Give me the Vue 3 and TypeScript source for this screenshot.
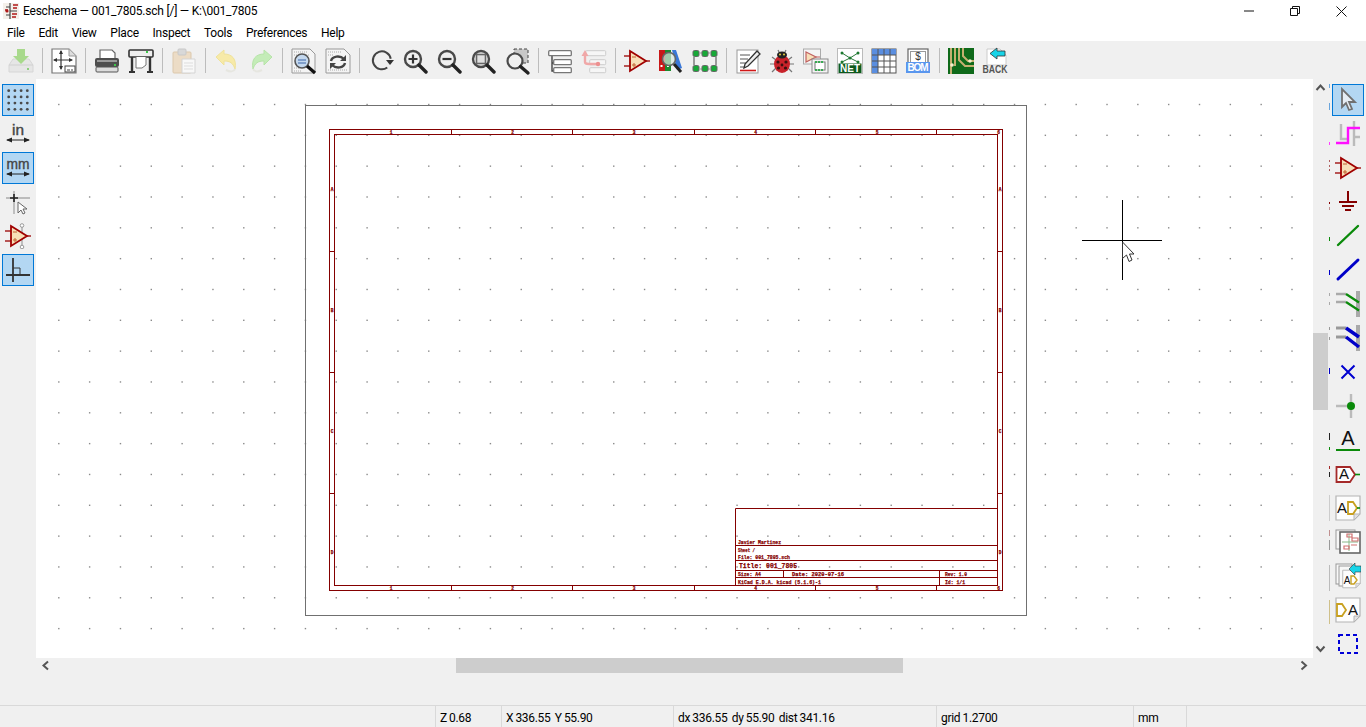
<script setup lang="ts">
// Eeschema main window: title bar, menus, three toolbars, sheet canvas, status bar.
const menus = ["File", "Edit", "View", "Place", "Inspect", "Tools", "Preferences", "Help"];

const GRID = 30.83;
const gridX = Array.from({ length: 41 }, (_, i) => 58.8 + i * GRID);
const gridY = Array.from({ length: 18 }, (_, i) => 104.5 + i * GRID);

// frame ticks, one zone is 121.3px wide
const ZONE = 121.3;
const colTicks = [1, 2, 3, 4, 5].map((i) => 329.7 + i * ZONE);
const rowTicks = [1, 2, 3].map((i) => 129.3 + i * ZONE);
const colLabels = ["1", "2", "3", "4", "5", "6"];
const rowLabels = ["A", "B", "C", "D"];

// bits of the right toolbar's icons that stick out next to the scrollbar
const slivers = [
  { y: 84, h: 4, c: "#6aa5dc" }, { y: 103, h: 7, c: "#6aa5dc" }, { y: 142, h: 3, c: "#ff40ff" },
  { y: 160, h: 2, c: "#b06060" }, { y: 165, h: 2, c: "#b06060" }, { y: 169, h: 2, c: "#b06060" },
  { y: 202, h: 2, c: "#840000" }, { y: 207, h: 3, c: "#c09090" }, { y: 237, h: 4, c: "#0a8a0a" },
  { y: 270, h: 5, c: "#0000c8" }, { y: 293, h: 3, c: "#aaaaaa" }, { y: 302, h: 3, c: "#aaaaaa" },
  { y: 327, h: 3, c: "#999999" }, { y: 337, h: 3, c: "#999999" }, { y: 368, h: 6, c: "#0000c8" },
  { y: 433, h: 7, c: "#222222" }, { y: 447, h: 3, c: "#0a8a0a" }, { y: 466, h: 3, c: "#a52a2a" },
  { y: 472, h: 5, c: "#222222" }, { y: 495, h: 26, c: "#cccccc" }, { y: 530, h: 6, c: "#c09090" },
  { y: 540, h: 10, c: "#999999" }, { y: 565, h: 26, c: "#bbbbbb" }, { y: 600, h: 24, c: "#cfc08a" },
];
</script>

<template>
  <div class="window">
    <svg class="defs" width="0" height="0">
      <symbol id="opamp" viewBox="0 0 26 26">
        <path d="M0 8H6M0 18H6M21 13H26" fill="none" stroke="#a52020" stroke-width="1.6" />
        <path d="M6 3L22 13L6 23Z" fill="#f7dfb8" stroke="#a00000" stroke-width="1.8" />
        <path d="M8 9H12M8 17H12M10 15V19" stroke="#c06030" stroke-width="1" />
      </symbol>
      <symbol id="lens" viewBox="0 0 26 26">
        <circle cx="11" cy="11" r="8" fill="none" stroke="#4a4a4a" stroke-width="2.4" />
        <path d="M17 17L24 24" stroke="#222" stroke-width="3.4" stroke-linecap="round" />
      </symbol>
      <symbol id="sheetpage" viewBox="0 0 26 26">
        <path d="M1 1H25V19L19 25H1Z" fill="#fdfdfd" stroke="#b4b4b4" stroke-width="1.2" />
        <path d="M19 25V19H25Z" fill="#e2e2e2" stroke="#b4b4b4" stroke-width="1" />
      </symbol>
    </svg>

    <header class="titlebar">
      <svg class="app-icon" width="16" height="16" viewBox="0 0 16 16">
        <rect x="0" y="0" width="16" height="16" fill="#f4f0ea" />
        <path d="M7 0V16M3 4H7M3 12H7M7 8H14" stroke="#444" stroke-width="1.2" fill="none" />
        <path d="M10 2H15M10 5H14M2 7H5M9 11H14M9 14H13" stroke="#b01818" stroke-width="1.6" />
        <circle cx="4" cy="8" r="1.6" fill="#b01818" />
      </svg>
      <span class="title-text">Eeschema — 001_7805.sch [/] — K:\001_7805</span>
      <div class="win-buttons">
        <div class="win-btn">
          <svg width="10" height="10" viewBox="0 0 10 10"><path d="M0 5H10" stroke="#111" /></svg>
        </div>
        <div class="win-btn">
          <svg width="10" height="10" viewBox="0 0 10 10">
            <path d="M0.5 2.5H7.5V9.5H0.5ZM2.5 2.5V0.5H9.5V7.5H7.5" fill="none" stroke="#111" />
          </svg>
        </div>
        <div class="win-btn">
          <svg width="11" height="11" viewBox="0 0 11 11"><path d="M0.5 0.5L10.5 10.5M10.5 0.5L0.5 10.5" stroke="#111" /></svg>
        </div>
      </div>
    </header>

    <nav class="menubar">
      <span v-for="m in menus" :key="m" class="menu-item">{{ m }}</span>
    </nav>

    <div class="top-toolbar">
      <div class="tool">
        <svg width="26" height="26" viewBox="0 0 26 26">
          <path d="M5 11L1 17V24H25V17L21 11Z" fill="#e6e6e6" stroke="#d6d6d6" />
          <path d="M1 17H25" stroke="#d0d0d0" />
          <path d="M9 1H17V8H21L13 16L5 8H9Z" fill="#a8d98c" />
          <rect x="19" y="20" width="2" height="2" fill="#8fd080" />
        </svg>
      </div>
      <i class="sep"></i>
      <div class="tool">
        <svg width="26" height="26" viewBox="0 0 26 26">
          <path d="M1 1H18L25 8V25H1Z" fill="#fff" stroke="#777" stroke-width="1.2" />
          <path d="M18 1V8H25" fill="#ddd" stroke="#999" />
          <path d="M10 3V21M3 12H21" stroke="#333" stroke-width="1.2" />
          <path d="M10 2L8 6H12ZM10 22L8 18H12ZM2 12L6 10V14ZM22 12L18 10V14Z" fill="#333" />
          <rect x="14" y="18" width="10" height="6" fill="#fff" stroke="#444" />
          <path d="M16 22H19M20 22H22" stroke="#444" />
        </svg>
      </div>
      <i class="sep"></i>
      <div class="tool">
        <svg width="26" height="26" viewBox="0 0 26 26">
          <path d="M6 11V2H18L21 5V11Z" fill="#fff" stroke="#666" stroke-width="1.2" />
          <rect x="1" y="10" width="24" height="9" rx="2" fill="#4e4e4e" />
          <rect x="3" y="12" width="20" height="2" fill="#9a9a9a" />
          <rect x="20" y="16" width="2" height="2" fill="#3ec84a" />
          <rect x="2" y="19" width="22" height="5" rx="1" fill="#dcdcdc" stroke="#555" />
        </svg>
      </div>
      <div class="tool">
        <svg width="26" height="26" viewBox="0 0 26 26">
          <rect x="1" y="2" width="24" height="7" rx="1" fill="#eee" stroke="#333" stroke-width="1.6" />
          <rect x="18" y="3" width="2" height="2" fill="#3ec84a" />
          <path d="M8 9V20H14L18 17V9" fill="#fff" stroke="#777" />
          <path d="M4 9V23M22 9V23" stroke="#333" stroke-width="2.4" />
          <path d="M1 24H7M19 24H25" stroke="#333" stroke-width="2" />
        </svg>
      </div>
      <i class="sep"></i>
      <div class="tool">
        <svg width="26" height="26" viewBox="0 0 26 26">
          <rect x="2" y="4" width="18" height="21" rx="1" fill="#ecdcc6" stroke="#dcc8ac" />
          <rect x="7" y="1" width="8" height="6" rx="1" fill="#d8d8d8" stroke="#c8c8c8" />
          <path d="M11 11H24V25H11Z" fill="#f8f8f8" stroke="#d4d4d4" />
          <path d="M13 15H22M13 18H22M13 21H22" stroke="#dddddd" />
        </svg>
      </div>
      <i class="sep"></i>
      <div class="tool">
        <svg width="26" height="26" viewBox="0 0 26 26">
          <path d="M2 9L10 2V6C18 6 23 11 21 21C19 15 16 13 10 13V17Z" fill="#f7eaa8" stroke="#efe29a" />
          <path d="M12 22C16 24 20 24 21 21" stroke="#e6e6e0" stroke-width="2" fill="none" />
        </svg>
      </div>
      <div class="tool">
        <svg width="26" height="26" viewBox="0 0 26 26">
          <path d="M24 9L16 2V6C8 6 3 11 5 21C7 15 10 13 16 13V17Z" fill="#c4ecb8" stroke="#b6e4a8" />
          <path d="M14 22C10 24 6 24 5 21" stroke="#e6e6e0" stroke-width="2" fill="none" />
        </svg>
      </div>
      <i class="sep"></i>
      <div class="tool">
        <svg width="26" height="26" viewBox="0 0 26 26">
          <path d="M1 1H19L24 6V25H1Z" fill="#f4f4f4" stroke="#999" />
          <path d="M3 4H16M3 7H18M3 20H8M3 23H10" stroke="#aaa" stroke-dasharray="1 1" />
          <circle cx="11" cy="13" r="7" fill="#c4d8ee" stroke="#555" stroke-width="1.6" />
          <path d="M7 12H15M7 15H15" stroke="#6a8cc0" stroke-width="1.4" />
          <path d="M16 18L24 25" stroke="#111" stroke-width="3.2" />
        </svg>
      </div>
      <div class="tool">
        <svg width="26" height="26" viewBox="0 0 26 26">
          <path d="M1 1H19L25 7V25H1Z" fill="#f4f4f4" stroke="#999" />
          <path d="M3 4H16M3 7H8M3 22H22" stroke="#aaa" stroke-dasharray="1 1" />
          <path d="M6 13C7 8 15 7 19 11M20 15C19 20 11 21 7 17" fill="none" stroke="#444" stroke-width="2.4" />
          <path d="M21 7V13H15ZM5 21V15H11Z" fill="#444" />
        </svg>
      </div>
      <i class="sep"></i>
      <div class="tool">
        <svg width="26" height="26" viewBox="0 0 26 26">
          <path d="M19 5A9 9 0 1 0 22 14" fill="none" stroke="#444" stroke-width="2" transform="rotate(40 13 13)" />
          <path d="M18 12H26L22 17Z" fill="#333" />
        </svg>
      </div>
      <div class="tool">
        <svg width="26" height="26" viewBox="0 0 26 26">
          <use href="#lens" width="26" height="26" />
          <path d="M6.5 11H15.5M11 6.5V15.5" stroke="#333" stroke-width="2.2" />
        </svg>
      </div>
      <div class="tool">
        <svg width="26" height="26" viewBox="0 0 26 26">
          <use href="#lens" width="26" height="26" />
          <path d="M6.5 11H15.5" stroke="#333" stroke-width="2.2" />
        </svg>
      </div>
      <div class="tool">
        <svg width="26" height="26" viewBox="0 0 26 26">
          <use href="#lens" width="26" height="26" />
          <rect x="6.5" y="6.5" width="9" height="9" fill="#e0e0e0" stroke="#666" stroke-width="1.6" />
        </svg>
      </div>
      <div class="tool">
        <svg width="26" height="26" viewBox="0 0 26 26">
          <rect x="10" y="1" width="14" height="14" fill="#c8c8c8" stroke="#444" stroke-dasharray="3 2" />
          <circle cx="11" cy="13" r="7.5" fill="#f0f0f0" stroke="#4a4a4a" stroke-width="2.2" />
          <path d="M16.5 18.5L24 25" stroke="#222" stroke-width="3.4" stroke-linecap="round" />
        </svg>
      </div>
      <i class="sep"></i>
      <div class="tool">
        <svg width="26" height="26" viewBox="0 0 26 26">
          <path d="M5 8V23H12M5 15H12" fill="none" stroke="#444" stroke-width="1.4" />
          <rect x="1.7" y="2.7" width="22.6" height="5" rx="1" fill="#fff" stroke="#777" stroke-width="1.3" />
          <rect x="6.7" y="11.7" width="17.6" height="5" rx="1" fill="#fff" stroke="#777" stroke-width="1.3" />
          <rect x="6.7" y="19.7" width="17.6" height="5" rx="1" fill="#fff" stroke="#777" stroke-width="1.3" />
        </svg>
      </div>
      <div class="tool">
        <svg width="26" height="26" viewBox="0 0 26 26">
          <g opacity="0.4">
            <rect x="4.7" y="2.7" width="20" height="5" rx="1" fill="#fff" stroke="#999" />
            <rect x="8.7" y="11.7" width="16" height="5" rx="1" fill="#fff" stroke="#999" />
            <rect x="8.7" y="19.7" width="16" height="5" rx="1" fill="#fff" stroke="#999" />
          </g>
          <path d="M4 8V14C4 16 6 16 8 16H16" fill="none" stroke="#f0a8a8" stroke-width="2.4" />
          <path d="M4 2L0.5 8H7.5Z" fill="#f0a8a8" />
          <circle cx="17" cy="16" r="2.2" fill="#ec9090" />
        </svg>
      </div>
      <i class="sep"></i>
      <div class="tool"><svg width="26" height="26" viewBox="0 0 26 26"><use href="#opamp" width="26" height="26" /></svg></div>
      <div class="tool">
        <svg width="26" height="26" viewBox="0 0 26 26">
          <rect x="1" y="2" width="6" height="21" fill="#c81818" />
          <rect x="7" y="2" width="6" height="21" fill="#1c8a2e" />
          <path d="M14 2H18L24 20L19 22Z" fill="#3a78d8" />
          <rect x="2.5" y="17" width="2" height="2" fill="#fff" />
          <rect x="9" y="17" width="2" height="2" fill="#fff" />
          <circle cx="11" cy="11" r="6.5" fill="#d8e8e0" fill-opacity="0.7" stroke="#666" stroke-width="1.5" />
          <path d="M16 16L23 24" stroke="#222" stroke-width="3" />
        </svg>
      </div>
      <div class="tool">
        <svg width="26" height="26" viewBox="0 0 26 26">
          <path d="M2 9V17M24 9V17" stroke="#777" stroke-width="1.4" />
          <path d="M8 5H18M8 21H18" stroke="#999" stroke-width="1" />
          <rect x="1" y="2.5" width="6" height="6" rx="1.5" fill="#18a838" stroke="#666" />
          <rect x="10" y="2.5" width="6" height="6" rx="1.5" fill="#18a838" stroke="#666" />
          <rect x="19" y="2.5" width="6" height="6" rx="1.5" fill="#18a838" stroke="#666" />
          <rect x="1" y="17.5" width="6" height="6" rx="1.5" fill="#18a838" stroke="#666" />
          <rect x="10" y="17.5" width="6" height="6" rx="1.5" fill="#18a838" stroke="#666" />
          <rect x="19" y="17.5" width="6" height="6" rx="1.5" fill="#18a838" stroke="#666" />
        </svg>
      </div>
      <i class="sep"></i>
      <div class="tool">
        <svg width="26" height="26" viewBox="0 0 26 26">
          <rect x="2" y="2" width="21" height="23" fill="#fff" stroke="#999" />
          <path d="M5 7H15M5 11H13M5 15H11M5 19H9" stroke="#555" />
          <path d="M22 3L25 6L13 18L9 20L10 16Z" fill="#eee" stroke="#333" stroke-width="1.3" />
          <path d="M5 22.5H21" stroke="#d01818" stroke-width="1.6" />
        </svg>
      </div>
      <div class="tool">
        <svg width="26" height="26" viewBox="0 0 26 26">
          <path d="M3 9L7 12M23 9L19 12M1 16H6M25 16H20M3 24L7 20M23 24L19 20M9 2L11 6M17 2L15 6" stroke="#777" stroke-width="1.2" />
          <ellipse cx="13" cy="16" rx="8" ry="9" fill="#c8222a" />
          <ellipse cx="13" cy="7" rx="5" ry="3.4" fill="#222" />
          <circle cx="11" cy="6.5" r="1" fill="#e8d040" />
          <circle cx="15" cy="6.5" r="1" fill="#e8d040" />
          <circle cx="9" cy="14" r="1.6" fill="#3a1010" />
          <circle cx="17" cy="14" r="1.6" fill="#3a1010" />
          <circle cx="9.5" cy="20" r="1.6" fill="#3a1010" />
          <circle cx="16.5" cy="20" r="1.6" fill="#3a1010" />
          <circle cx="13" cy="17" r="1.4" fill="#3a1010" />
        </svg>
      </div>
      <div class="tool">
        <svg width="26" height="26" viewBox="0 0 26 26">
          <rect x="0.5" y="1" width="17" height="15" fill="#f4f4f4" stroke="#aaa" />
          <path d="M3 4L13 9L3 14Z" fill="#f7dfb8" stroke="#c06060" stroke-width="1.2" />
          <path d="M13 9H17" stroke="#c06060" />
          <rect x="9" y="11" width="16" height="14" fill="#f4f4f4" stroke="#888" />
          <rect x="12" y="14" width="10" height="8" fill="#fff" stroke="#777" />
          <path d="M13 13V15M16 13V15M19 13V15M13 21V23M16 21V23M19 21V23" stroke="#18a838" stroke-width="1.6" />
        </svg>
      </div>
      <div class="tool">
        <svg width="26" height="26" viewBox="0 0 26 26">
          <rect x="0.5" y="0.5" width="25" height="25" fill="#fff" stroke="#bbb" />
          <path d="M5 5L13 10L21 5M13 10L5 14M13 10L21 14" stroke="#2a7a3a" fill="none" />
          <circle cx="5" cy="5" r="1.5" fill="#1c7a30" />
          <circle cx="21" cy="5" r="1.5" fill="#1c7a30" />
          <circle cx="13" cy="10" r="1.5" fill="#1c7a30" />
          <circle cx="5" cy="14" r="1.5" fill="#1c7a30" />
          <circle cx="21" cy="14" r="1.5" fill="#1c7a30" />
          <rect x="1.5" y="15.5" width="23" height="9.5" fill="#0c5a1c" />
          <text x="13" y="24" class="icon-label net" text-anchor="middle" textLength="20">NET</text>
        </svg>
      </div>
      <div class="tool">
        <svg width="26" height="26" viewBox="0 0 26 26">
          <rect x="1" y="1" width="24" height="24" fill="#fff" stroke="#555" />
          <rect x="1" y="1" width="24" height="6" fill="#5a8ee0" />
          <rect x="1" y="1" width="6" height="24" fill="#5a8ee0" />
          <path d="M7 1V25M13 1V25M19 1V25M1 7H25M1 13H25M1 19H25" stroke="#555" />
        </svg>
      </div>
      <div class="tool">
        <svg width="26" height="26" viewBox="0 0 26 26">
          <rect x="3" y="1" width="20" height="16" fill="#fff" stroke="#666" stroke-width="1.2" />
          <rect x="5.5" y="3.5" width="15" height="11" fill="none" stroke="#999" />
          <text x="13" y="12" class="icon-label dollar" text-anchor="middle">$</text>
          <rect x="1" y="14" width="24" height="11" fill="#5a96ee" />
          <text x="13" y="23" class="icon-label bom" text-anchor="middle" textLength="21">BOM</text>
        </svg>
      </div>
      <i class="sep"></i>
      <div class="tool">
        <svg width="26" height="26" viewBox="0 0 26 26">
          <rect x="0" y="0" width="26" height="26" fill="#0f6a1a" />
          <path d="M3 0V26M7 0V18M11 0V12L17 18H26M15 0V8L20 13H26" fill="none" stroke="#c4b070" stroke-width="2" />
          <circle cx="22" cy="13" r="1.8" fill="#f4eecc" />
          <circle cx="4" cy="17" r="1.8" fill="#f4eecc" />
        </svg>
      </div>
      <div class="tool">
        <svg width="26" height="26" viewBox="0 0 26 26">
          <path d="M5 1H18L24 7V17H5Z" fill="#fff" stroke="#ccc" />
          <path d="M8 5.5L15 0V3H23V8H15V11Z" fill="#18d4e8" stroke="#333" stroke-width="0.8" />
          <text x="13" y="25" class="icon-label back" text-anchor="middle" textLength="25" lengthAdjust="spacingAndGlyphs">BACK</text>
        </svg>
      </div>
    </div>

    <div class="main">
      <aside class="side-toolbar">
        <div class="side-tool on">
          <svg width="26" height="26" viewBox="0 0 26 26" fill="#4a4a4a">
            <template v-for="y in [3.7, 9.9, 16.1, 22.3]" :key="y">
              <circle v-for="x in [3.7, 9.9, 16.1, 22.3]" :key="x" :cx="x" :cy="y" r="1.4" />
            </template>
          </svg>
        </div>
        <div class="side-tool">
          <svg width="26" height="26" viewBox="0 0 26 26">
            <text x="13" y="14" class="icon-label units" text-anchor="middle" textLength="12" lengthAdjust="spacingAndGlyphs">in</text>
            <path d="M2 19H24" stroke="#222" />
            <path d="M1 19L7 16.5V21.5ZM25 19L19 16.5V21.5Z" fill="#222" />
          </svg>
        </div>
        <div class="side-tool on">
          <svg width="26" height="26" viewBox="0 0 26 26">
            <text x="13" y="14" class="icon-label units" text-anchor="middle" textLength="23" lengthAdjust="spacingAndGlyphs">mm</text>
            <path d="M2 19H24" stroke="#222" />
            <path d="M1 19L7 16.5V21.5ZM25 19L19 16.5V21.5Z" fill="#222" />
          </svg>
        </div>
        <div class="side-tool">
          <svg width="26" height="26" viewBox="0 0 26 26">
            <path d="M9 2V25M1 9H25" stroke="#aaa" stroke-width="1.4" />
            <path d="M9 5V13M5 9H13" stroke="#222" stroke-width="1.6" />
            <path d="M13 13V24L16 21L18 25L20 24L18 20H22Z" fill="#fff" stroke="#666" />
          </svg>
        </div>
        <div class="side-tool">
          <svg width="26" height="26" viewBox="0 0 26 26">
            <path d="M17 4V24" stroke="#aaa" stroke-width="1.4" />
            <circle cx="17" cy="2.5" r="1.8" fill="#fff" stroke="#999" />
            <circle cx="17" cy="24" r="1.8" fill="#fff" stroke="#999" />
            <use href="#opamp" width="26" height="26" />
          </svg>
        </div>
        <div class="side-tool on">
          <svg width="26" height="26" viewBox="0 0 26 26">
            <path d="M8 1V25M1 18H25" stroke="#333" stroke-width="1.8" />
            <path d="M8 11H15V18" fill="none" stroke="#333" />
          </svg>
        </div>
      </aside>

      <div class="center">
        <div class="canvas-row">
          <svg class="canvas" width="1277" height="579" viewBox="36 79 1277 579">
            <g fill="#8a8a8a">
              <template v-for="y in gridY" :key="y">
                <rect v-for="x in gridX" :key="x" :x="x - 0.7" :y="y - 0.7" width="1.4" height="1.4" />
              </template>
            </g>
            <rect x="305.5" y="105.5" width="721" height="510" fill="none" stroke="#707070" />
            <g fill="none" stroke="#840000">
              <rect x="329.5" y="129.5" width="673" height="461" />
              <rect x="334.5" y="134.5" width="663" height="451" />
              <path v-for="x in colTicks" :key="x" :d="`M${Math.round(x) + 0.5} 129V134M${Math.round(x) + 0.5} 586V591`" />
              <path v-for="y in rowTicks" :key="y" :d="`M330 ${Math.round(y) + 0.5}H334M998 ${Math.round(y) + 0.5}H1002`" />
              <path d="M735.5 585V508.5H997M735.5 545.5H997M735.5 560.5H997M735.5 570.5H997M735.5 577.5H997M783.5 570V577M939.5 570V585" />
            </g>
            <g class="zone-text" text-anchor="middle">
              <template v-for="(c, i) in colLabels" :key="c">
                <text :x="391 + i * 121.5" y="133.5">{{ c }}</text>
                <text :x="391 + i * 121.5" y="590">{{ c }}</text>
              </template>
              <template v-for="(r, i) in rowLabels" :key="r">
                <text x="332" :y="191 + i * 121">{{ r }}</text>
                <text x="1000" :y="191 + i * 121">{{ r }}</text>
              </template>
            </g>
            <g class="sheet-text">
              <text x="738" y="544" textLength="43" lengthAdjust="spacingAndGlyphs">Javier Martinez</text>
              <text x="738" y="552" textLength="17" lengthAdjust="spacingAndGlyphs">Sheet /</text>
              <text x="738" y="558.5" textLength="52" lengthAdjust="spacingAndGlyphs">File: 001_7805.sch</text>
              <text x="739" y="568" class="big" textLength="58" lengthAdjust="spacingAndGlyphs">Title: 001_7805</text>
              <text x="738" y="576" textLength="23" lengthAdjust="spacingAndGlyphs">Size: A4</text>
              <text x="792" y="576" textLength="52" lengthAdjust="spacingAndGlyphs">Date: 2020-07-16</text>
              <text x="945" y="576" textLength="22" lengthAdjust="spacingAndGlyphs">Rev: 1.0</text>
              <text x="738" y="583.5" textLength="83" lengthAdjust="spacingAndGlyphs">KiCad E.D.A.  kicad (5.1.6)-1</text>
              <text x="945" y="583.5" textLength="20" lengthAdjust="spacingAndGlyphs">Id: 1/1</text>
            </g>
            <path d="M1082 240.5H1162M1122.5 200V280" stroke="#000" />
            <path d="M1122.5 242V258.5L1126.5 255L1129 261.5L1132 260L1129.5 254H1134Z" fill="#fff" stroke="#333" />
          </svg>
          <div class="vbar">
            <div class="vtrack">
              <svg class="arrow-v" width="15" height="17" viewBox="0 0 15 17"><path d="M3.5 11L7.5 6.5L11.5 11" fill="none" stroke="#555" stroke-width="2" /></svg>
              <div class="vthumb"></div>
              <svg class="arrow-v bottom" width="15" height="17" viewBox="0 0 15 17"><path d="M3.5 5.5L7.5 10L11.5 5.5" fill="none" stroke="#555" stroke-width="2" /></svg>
            </div>
            <svg class="slivers" width="2" height="579" viewBox="0 79 2 579">
              <rect v-for="s in slivers" :key="s.y" x="1" :y="s.y" width="1" :height="s.h" :fill="s.c" />
            </svg>
          </div>
        </div>
        <div class="hbar">
          <svg class="arrow-h" width="17" height="15" viewBox="0 0 17 15"><path d="M12 3.5L7.5 7.5L12 11.5" fill="none" stroke="#555" stroke-width="2" /></svg>
          <div class="htrack"><div class="hthumb"></div></div>
          <svg class="arrow-h" width="17" height="15" viewBox="0 0 17 15"><path d="M5.5 3.5L10 7.5L5.5 11.5" fill="none" stroke="#555" stroke-width="2" /></svg>
          <div class="hcorner"></div>
        </div>
      </div>

      <aside class="side-toolbar">
        <div class="side-tool on">
          <svg width="26" height="26" viewBox="0 0 26 26">
            <path d="M7 2V20L11 16L14 23L17 22L14 15H20Z" fill="#e6edf4" stroke="#707070" stroke-width="1.8" />
          </svg>
        </div>
        <div class="side-tool">
          <svg width="26" height="26" viewBox="0 0 26 26">
            <path d="M6 3V18H13M19 0V25M19 16H25" fill="none" stroke="#bbb" stroke-width="2.4" />
            <path d="M1 22H13V7H25" fill="none" stroke="#ff10ff" stroke-width="2.4" />
          </svg>
        </div>
        <div class="side-tool"><svg width="26" height="26" viewBox="0 0 26 26"><use href="#opamp" width="26" height="26" /></svg></div>
        <div class="side-tool">
          <svg width="26" height="26" viewBox="0 0 26 26">
            <path d="M13 2V13M4 13H22M7 17H19M10 21H16" stroke="#840000" stroke-width="2" />
          </svg>
        </div>
        <div class="side-tool">
          <svg width="26" height="26" viewBox="0 0 26 26"><path d="M3 22L23 3" stroke="#0a8a0a" stroke-width="2.4" stroke-linecap="round" /></svg>
        </div>
        <div class="side-tool">
          <svg width="26" height="26" viewBox="0 0 26 26"><path d="M3 22L23 3" stroke="#0000c8" stroke-width="3" stroke-linecap="round" /></svg>
        </div>
        <div class="side-tool">
          <svg width="26" height="26" viewBox="0 0 26 26">
            <rect x="21" y="0" width="4" height="26" fill="#aaa" />
            <path d="M1 3H11M1 11H11" stroke="#aaa" stroke-width="2.4" />
            <path d="M11 3L24 11.5M11 11L24 19.5" stroke="#0a8a0a" stroke-width="2.2" />
          </svg>
        </div>
        <div class="side-tool">
          <svg width="26" height="26" viewBox="0 0 26 26">
            <rect x="21" y="0" width="4" height="26" fill="#aaa" />
            <path d="M1 3H11M1 12H11" stroke="#999" stroke-width="3.2" />
            <path d="M11 3L24 12M11 12L24 22" stroke="#0000c8" stroke-width="3.4" />
          </svg>
        </div>
        <div class="side-tool">
          <svg width="26" height="26" viewBox="0 0 26 26"><path d="M6.5 6.5L19.5 19.5M19.5 6.5L6.5 19.5" stroke="#0000d0" stroke-width="2" /></svg>
        </div>
        <div class="side-tool">
          <svg width="26" height="26" viewBox="0 0 26 26">
            <path d="M1 13H16M16 1V25" stroke="#bbb" stroke-width="2.4" />
            <circle cx="16" cy="13" r="4" fill="#0a8a0a" />
          </svg>
        </div>
        <div class="side-tool">
          <svg width="26" height="26" viewBox="0 0 26 26">
            <text x="13" y="18" class="icon-label big-a" text-anchor="middle">A</text>
            <path d="M1 23H25" stroke="#0a8a0a" stroke-width="2" />
          </svg>
        </div>
        <div class="side-tool">
          <svg width="26" height="26" viewBox="0 0 26 26">
            <path d="M1.5 6H15L20 13.5L15 21H1.5Z" fill="#fff" stroke="#a52a2a" stroke-width="1.8" />
            <path d="M20 13.5H25" stroke="#0a8a0a" stroke-width="1.6" />
            <text x="9" y="18" class="icon-label mid-a" text-anchor="middle">A</text>
          </svg>
        </div>
        <div class="side-tool">
          <svg width="26" height="26" viewBox="0 0 26 26">
            <use href="#sheetpage" width="26" height="26" />
            <text x="7" y="18" class="icon-label mid-a" text-anchor="middle">A</text>
            <path d="M13 7H18L22 13L18 19H13Z" fill="#fff" stroke="#c8a020" stroke-width="1.8" />
            <path d="M22 13H25" stroke="#0a8a0a" stroke-width="1.6" />
          </svg>
        </div>
        <div class="side-tool">
          <svg width="26" height="26" viewBox="0 0 26 26">
            <rect x="1" y="1" width="19" height="19" fill="#f6f6f6" stroke="#999" />
            <rect x="5" y="3" width="20" height="21" fill="#fff" stroke="#666" stroke-width="1.6" />
            <path d="M14 5V22M7 13H23" stroke="#88b888" />
            <path d="M12 5H17V8H12ZM17 9H23V12H17ZM9 17H14V20H9ZM16 16H22" fill="none" stroke="#d07070" stroke-width="1.2" />
          </svg>
        </div>
        <div class="side-tool">
          <svg width="26" height="26" viewBox="0 0 26 26">
            <rect x="1" y="1" width="16" height="20" fill="#f8f8f8" stroke="#999" />
            <rect x="4" y="3" width="16" height="20" fill="#f8f8f8" stroke="#999" />
            <use href="#sheetpage" x="7" y="6" width="19" height="20" />
            <text x="12" y="21" class="icon-label small-a" text-anchor="middle">A</text>
            <path d="M16 13H19L22 17L19 21H16Z" fill="#fff" stroke="#c8a020" stroke-width="1.4" />
            <path d="M14 6L20 0V3H26V9H20V12Z" fill="#18d4e8" stroke="#333" stroke-width="0.6" />
          </svg>
        </div>
        <div class="side-tool">
          <svg width="26" height="26" viewBox="0 0 26 26">
            <use href="#sheetpage" width="26" height="26" />
            <path d="M2 7H7L11 13L7 19H2Z" fill="#fff" stroke="#c8a020" stroke-width="1.8" />
            <text x="18" y="18" class="icon-label mid-a" text-anchor="middle">A</text>
          </svg>
        </div>
        <div class="side-tool">
          <svg width="26" height="26" viewBox="0 0 26 26">
            <rect x="4" y="4" width="18" height="18" fill="none" stroke="#0000d8" stroke-width="2" stroke-dasharray="4 3" />
          </svg>
        </div>
      </aside>
    </div>

    <div class="spacer"></div>

    <footer class="statusbar">
      <span class="cell c0"></span>
      <span class="cell c1">Z 0.68</span>
      <span class="cell c2">X 336.55&nbsp; Y 55.90</span>
      <span class="cell c3">dx 336.55&nbsp; dy 55.90&nbsp; dist 341.16</span>
      <span class="cell c4">grid 1.2700</span>
      <span class="cell c5">mm</span>
      <span class="cell c6"></span>
    </footer>
  </div>
</template>

<style scoped>
.window {
  width: 1366px;
  height: 727px;
  overflow: hidden;
  display: flex;
  flex-direction: column;
  background: #f0f0f0;
  font: 12px Roboto, "Noto Sans", sans-serif;
  color: #000;
}
.defs {
  position: absolute;
}

.titlebar {
  height: 22px;
  flex-shrink: 0;
  display: flex;
  align-items: center;
  background: #fff;
  padding-left: 3px;
}
.title-text {
  margin-left: 4px;
  letter-spacing: -0.22px;
}
.win-buttons {
  margin-left: auto;
  display: flex;
  padding-right: 2px;
}
.win-btn {
  width: 46px;
  height: 22px;
  display: flex;
  align-items: center;
  justify-content: center;
}

.menubar {
  height: 19px;
  flex-shrink: 0;
  box-sizing: border-box;
  padding-top: 3px;
  display: flex;
  align-items: center;
  background: #fff;
}
.menu-item {
  padding: 0 6.9px;
  letter-spacing: -0.25px;
}

.top-toolbar {
  height: 38px;
  flex-shrink: 0;
  box-sizing: border-box;
  padding: 1px 0 0 4px;
  display: flex;
  align-items: center;
  background: #f0f0f0;
}
.tool {
  width: 34px;
  height: 34px;
  flex-shrink: 0;
  display: flex;
  align-items: center;
  justify-content: center;
}
.tool svg {
  overflow: visible;
}
.sep {
  width: 9px;
  height: 25px;
  flex-shrink: 0;
  background: linear-gradient(#bcbcbc, #bcbcbc) center / 1px 100% no-repeat;
}

.icon-label {
  font-family: "Liberation Sans", sans-serif;
}
.net {
  font-size: 10px;
  font-weight: 700;
  fill: #fff;
}
.bom {
  font-size: 10px;
  font-weight: 700;
  fill: #fff;
}
.dollar {
  font-size: 10px;
  fill: #333;
}
.back {
  font-size: 11px;
  font-weight: 700;
  fill: #555;
}
.units {
  font-size: 15px;
  fill: #444;
  stroke: #444;
  stroke-width: 0.4px;
}
.big-a {
  font-size: 20px;
  fill: #111;
}
.mid-a {
  font-size: 15px;
  fill: #111;
}
.small-a {
  font-size: 10px;
  fill: #111;
}

.main {
  height: 594px;
  flex-shrink: 0;
  display: flex;
}
.side-toolbar {
  width: 36px;
  flex-shrink: 0;
  box-sizing: border-box;
  padding: 5px 2px 0;
  display: flex;
  flex-direction: column;
  gap: 2px;
  background: #f0f0f0;
}
.side-tool {
  width: 32px;
  height: 32px;
  flex-shrink: 0;
  box-sizing: border-box;
  border: 1px solid transparent;
  display: flex;
  align-items: center;
  justify-content: center;
}
.side-tool.on {
  background: #b3d7f3;
  border-color: #0078d7;
}

.center {
  flex: 1;
  min-width: 0;
  display: flex;
  flex-direction: column;
}
.canvas-row {
  height: 579px;
  display: flex;
}
.canvas {
  display: block;
  flex-shrink: 0;
  background: #fff;
}
.vbar {
  width: 17px;
  flex-shrink: 0;
  display: flex;
}
.vtrack {
  width: 15px;
  display: flex;
  flex-direction: column;
}
.arrow-v {
  display: block;
  flex-shrink: 0;
}
.vthumb {
  height: 77px;
  margin-top: 237px;
  background: #cdcdcd;
}
.arrow-v.bottom {
  margin-top: auto;
}
.slivers {
  display: block;
}
.sheet-text text {
  font: 700 5.6px "Liberation Mono", monospace;
  fill: #840000;
  stroke: #840000;
  stroke-width: 0.25px;
}
.sheet-text text.big {
  font-size: 7px;
}
.zone-text text {
  font: 700 4.5px "Liberation Mono", monospace;
  fill: #840000;
  stroke: #840000;
  stroke-width: 0.25px;
}

.hbar {
  height: 15px;
  display: flex;
}
.arrow-h {
  display: block;
  flex-shrink: 0;
}
.htrack {
  flex: 1;
  min-width: 0;
}
.hthumb {
  width: 447px;
  height: 15px;
  margin-left: 403px;
  background: #cdcdcd;
}
.hcorner {
  width: 17px;
  flex-shrink: 0;
}

.spacer {
  flex: 1;
}

.statusbar {
  height: 22px;
  flex-shrink: 0;
  box-sizing: border-box;
  border-top: 1px solid #d9d9d9;
  display: flex;
  align-items: center;
  white-space: nowrap;
  letter-spacing: -0.3px;
  word-spacing: -0.5px;
}
.cell {
  height: 21px;
  line-height: 24px;
  box-sizing: border-box;
  padding-left: 4px;
  border-right: 1px solid #d9d9d9;
  flex-shrink: 0;
  overflow: hidden;
}
.c0 { width: 436px; }
.c1 { width: 66px; }
.c2 { width: 172px; }
.c3 { width: 263px; }
.c4 { width: 197px; }
.c5 { width: 53px; }
.c6 { flex: 1; border-right: 0; }
</style>
